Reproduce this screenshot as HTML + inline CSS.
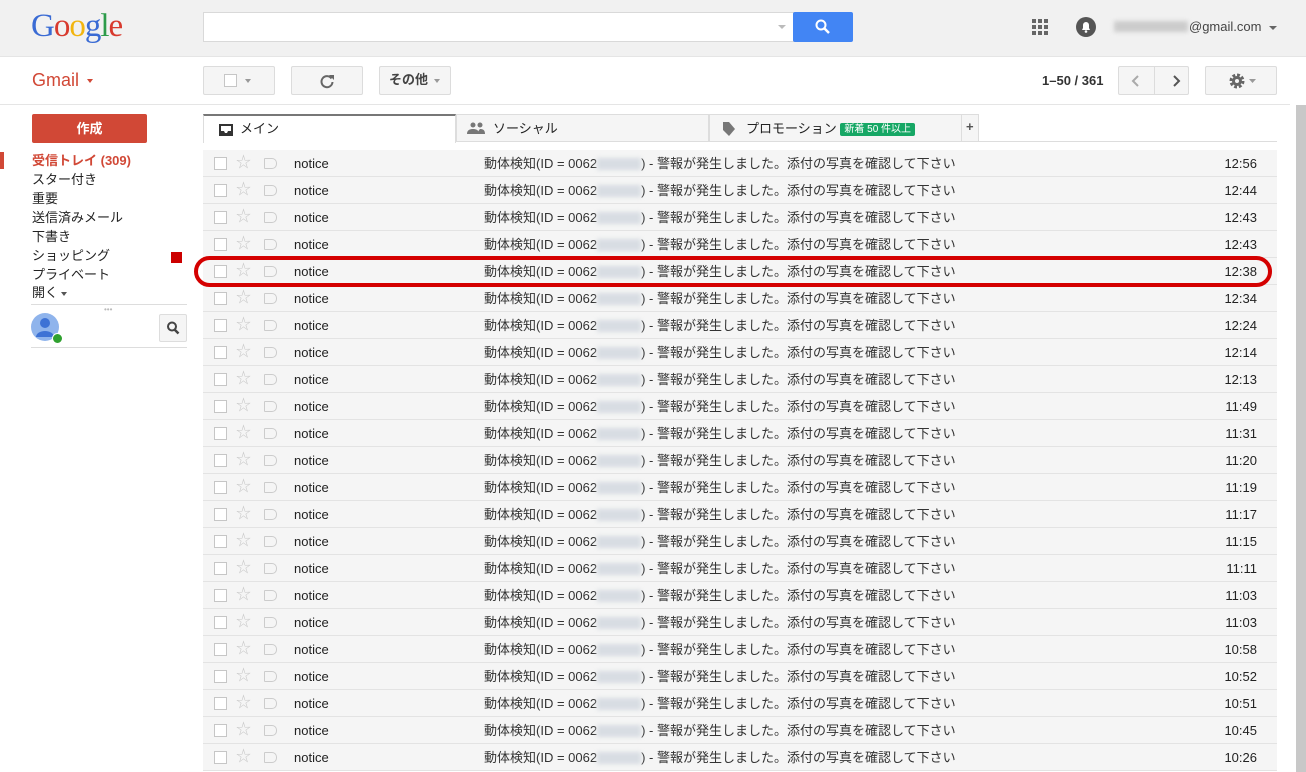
<!DOCTYPE html>
<html><head><meta charset="utf-8"><style>
*{box-sizing:border-box;margin:0;padding:0}
body{width:1306px;height:772px;overflow:hidden;background:#fff;font-family:"Liberation Sans","Noto Sans CJK JP",sans-serif;font-size:13px;color:#222;position:relative;line-height:15px}
.abs{position:absolute}
.hdr{left:0;top:0;width:1306px;height:57px;background:#f1f1f1;border-bottom:1px solid #e5e5e5}
.btn{position:absolute;background:#f5f5f5;border:1px solid #dcdcdc;border-radius:2px;height:29px;top:66px}
.tab{position:absolute;top:114px;height:28px;background:#f5f5f5;border:1px solid #ddd;font-size:13px;color:#222;padding:6px 0 0 36px}
.row{position:absolute;left:203px;width:1074px;height:27px;background:#f5f5f5;border-bottom:1px solid #e3e3e3}
.row .cb{position:absolute;left:11px;top:7px;width:13px;height:13px;border:1px solid #c6c6c6;background:#fff}
.row .st{position:absolute;left:33px;top:4px;font-size:15px;color:#c8c8c8;line-height:18px}
.row .lb{position:absolute;left:61px;top:8px;width:13px;height:11px;border:1px solid #ccc;border-radius:1px 5px 5px 1px}
.row .fr{position:absolute;left:91px;top:6px;font-size:13px}
.row .sj{position:absolute;left:281px;top:6px;font-size:13px;color:#333;white-space:nowrap}
.row .bl{display:inline-block;width:44px;height:12px;background:#d8dde3;filter:blur(2px);vertical-align:-2px}
.row .tm{position:absolute;right:20px;top:6px;font-size:13px}
.nav{position:absolute;left:32px;font-size:13px;color:#222}
</style></head><body>
<div class="abs hdr"></div>
<div class="abs" style="left:31px;top:8px;font-family:'Liberation Serif',serif;font-size:33px;letter-spacing:-1px;line-height:36px"><span style="color:#3a6bd4">G</span><span style="color:#d83a2e">o</span><span style="color:#f2b50f">o</span><span style="color:#3a6bd4">g</span><span style="color:#2d9b4a">l</span><span style="color:#d83a2e">e</span></div>
<div class="abs" style="left:203px;top:12px;width:591px;height:30px;background:#fff;border:1px solid #d9d9d9"></div>
<div class="abs" style="left:778px;top:25px;border-left:4px solid transparent;border-right:4px solid transparent;border-top:4px solid #bbb"></div>
<div class="abs" style="left:793px;top:12px;width:60px;height:30px;background:#4285f4;border-radius:2px">
<svg width="60" height="30"><circle cx="28" cy="13" r="4.5" fill="none" stroke="#fff" stroke-width="2"/><path d="M31 16l5 5" stroke="#fff" stroke-width="2.5"/></svg></div>
<div class="abs" style="left:1032px;top:19px"><svg width="16" height="16" fill="#666"><rect x="0" y="0" width="4" height="4"/><rect x="6" y="0" width="4" height="4"/><rect x="12" y="0" width="4" height="4"/><rect x="0" y="6" width="4" height="4"/><rect x="6" y="6" width="4" height="4"/><rect x="12" y="6" width="4" height="4"/><rect x="0" y="12" width="4" height="4"/><rect x="6" y="12" width="4" height="4"/><rect x="12" y="12" width="4" height="4"/></svg></div>
<div class="abs" style="left:1076px;top:17px;width:20px;height:20px;border-radius:50%;background:#555"><svg width="20" height="20"><path d="M6 13h8l-1-2v-3a3 3 0 0 0-6 0v3z" fill="#fff"/><circle cx="10" cy="14.5" r="1.3" fill="#fff"/></svg></div>
<div class="abs" style="left:1114px;top:21px;width:74px;height:11px;background:#ccc;filter:blur(2px)"></div>
<div class="abs" style="left:1189px;top:19px;color:#444;font-size:13px">@gmail.com</div>
<div class="abs" style="left:1269px;top:26px;border-left:4px solid transparent;border-right:4px solid transparent;border-top:4px solid #666"></div>

<div class="abs" style="left:32px;top:70px;color:#d14836;font-size:18px;line-height:20px">Gmail</div>
<div class="abs" style="left:87px;top:79px;border-left:3.5px solid transparent;border-right:3.5px solid transparent;border-top:4px solid #d14836"></div>
<div class="abs" style="left:0;top:104px;width:1290px;border-top:1px solid #e5e5e5"></div>

<div class="btn" style="left:203px;width:72px"><div class="abs" style="left:20px;top:7px;width:13px;height:13px;border:1px solid #c6c6c6;background:#fff"></div><div class="abs" style="left:41px;top:12px;border-left:3.5px solid transparent;border-right:3.5px solid transparent;border-top:4px solid #999"></div></div>
<div class="btn" style="left:291px;width:72px"><svg class="abs" style="left:27px;top:6px" width="16" height="16"><path d="M12.5 5.5A5.5 5.5 0 1 0 13.5 9" fill="none" stroke="#666" stroke-width="2"/><path d="M10 2h5v5z" fill="#666"/></svg></div>
<div class="btn" style="left:379px;width:72px;font-weight:bold;color:#444;padding:5px 0 0 9px">その他<span class="abs" style="left:54px;top:12px;border-left:3.5px solid transparent;border-right:3.5px solid transparent;border-top:4px solid #999"></span></div>
<div class="abs" style="left:1042px;top:73px;font-weight:bold;color:#333">1–50 / 361</div>
<div class="btn" style="left:1118px;width:71px"><div class="abs" style="left:35px;top:0;height:27px;border-left:1px solid #dcdcdc"></div><svg class="abs" style="left:10px;top:6px" width="60" height="16"><path d="M9 3L4 8l5 5" fill="none" stroke="#aaa" stroke-width="2"/><path d="M45 3l5 5-5 5" fill="none" stroke="#555" stroke-width="2"/></svg></div>
<div class="btn" style="left:1205px;width:72px"><svg class="abs" style="left:22px;top:5px" width="30" height="18"><circle cx="9" cy="9" r="5.5" fill="none" stroke="#666" stroke-width="4" stroke-dasharray="2.6 1.7"/><circle cx="9" cy="9" r="5" fill="#666"/><circle cx="9" cy="9" r="2" fill="#f5f5f5"/><path d="M21 7h7l-3.5 4z" fill="#999"/></svg></div>

<div class="abs" style="left:1296px;top:105px;width:10px;height:667px;background:#c8c8c8"></div>

<div class="abs" style="left:32px;top:114px;width:115px;height:29px;background:#d14836;border-radius:2px;color:#fff;font-weight:bold;text-align:center;line-height:29px;font-size:13px">作成</div>
<div class="abs" style="left:0;top:152px;width:4px;height:17px;background:#d14836"></div>
<div class="nav" style="top:153px;color:#d14836;font-weight:bold">受信トレイ (309)</div>
<div class="nav" style="top:172px">スター付き</div>
<div class="nav" style="top:191px">重要</div>
<div class="nav" style="top:210px">送信済みメール</div>
<div class="nav" style="top:229px">下書き</div>
<div class="nav" style="top:248px">ショッピング</div>
<div class="abs" style="left:171px;top:252px;width:11px;height:11px;background:#c00"></div>
<div class="nav" style="top:267px">プライベート</div>
<div class="nav" style="top:285px">開く<span style="display:inline-block;margin-left:3px;border-left:3.5px solid transparent;border-right:3.5px solid transparent;border-top:4px solid #555;vertical-align:middle"></span></div>
<div class="abs" style="left:31px;top:304px;width:156px;border-top:1px solid #ddd"></div>
<div class="abs" style="left:104px;top:308px;color:#bbb;font-size:8px;line-height:4px">•••</div>
<div class="abs" style="left:31px;top:313px;width:28px;height:28px;border-radius:50%;background:#8fb4ec;overflow:hidden"><svg width="28" height="28"><circle cx="14" cy="10" r="5" fill="#3d72d5"/><path d="M5 24a9 6 0 0 1 18 0z" fill="#3d72d5"/></svg></div>
<div class="abs" style="left:52px;top:333px;width:11px;height:11px;border-radius:50%;background:#2fa12f;border:1px solid #fff"></div>
<div class="abs" style="left:159px;top:314px;width:28px;height:28px;background:#f5f5f5;border:1px solid #ddd;border-radius:2px"><svg width="26" height="26"><circle cx="12" cy="11.5" r="4" fill="none" stroke="#444" stroke-width="2"/><path d="M14.5 14.5l4 4" stroke="#444" stroke-width="2.5"/></svg></div>
<div class="abs" style="left:31px;top:347px;width:156px;border-top:1px solid #ddd"></div>

<div class="tab" style="left:203px;width:253px;background:#fff;border:1px solid #ddd;border-top:2px solid #777;border-bottom:none;height:29px;padding-top:5px"><svg class="abs" style="left:14px;top:7px" width="16" height="14"><path d="M1 1h14v12H1z M3 3v5h3l1 2h2l1-2h3V3z" fill="#333" fill-rule="evenodd"/></svg>メイン</div>
<div class="tab" style="left:456px;width:253px"><svg class="abs" style="left:10px;top:7px" width="18" height="12" fill="#777"><circle cx="6" cy="3" r="2.5"/><circle cx="13" cy="3" r="2.5"/><path d="M0 12c0-4 3-5 6-5s6 1 6 5zM11 12c0-3 1-4 2-5 3 0 5 1 5 5z"/></svg>ソーシャル</div>
<div class="tab" style="left:709px;width:253px"><svg class="abs" style="left:12px;top:6px" width="14" height="16"><path d="M1 1h6l6 7-6 7-6-6z" fill="#777"/></svg>プロモーション <span style="display:inline-block;background:#16a765;color:#fff;font-size:10px;padding:0 4px;line-height:13px;border-radius:2px;vertical-align:1px">新着 50 件以上</span></div>
<div class="tab" style="left:961px;width:18px;padding:4px 0 0 4px;color:#555;font-weight:bold">+</div>
<div class="abs" style="left:979px;top:141px;width:298px;border-top:1px solid #ddd"></div>

<div id="rows"></div>
<div class="abs" style="left:194px;top:256px;width:1078px;height:31px;border:4px solid #d40000;border-radius:16px"></div>
<script>
var t=["12:56","12:44","12:43","12:43","12:38","12:34","12:24","12:14","12:13","11:49","11:31","11:20","11:19","11:17","11:15","11:11","11:03","11:03","10:58","10:52","10:51","10:45","10:26"];
var h="";for(var i=0;i<t.length;i++){h+='<div class="row" style="top:'+(150+27*i)+'px"><div class="cb"></div><div class="st">☆</div><div class="lb"></div><div class="fr">notice</div><div class="sj">動体検知(ID = 0062<span class="bl"></span>) - 警報が発生しました。添付の写真を確認して下さい</div><div class="tm">'+t[i]+'</div></div>';}
document.getElementById("rows").innerHTML=h;
</script>
</body></html>
